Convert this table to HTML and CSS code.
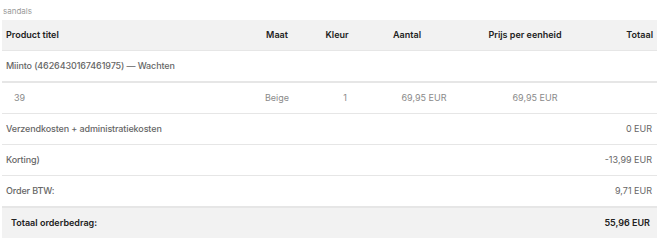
FILE: index.html
```html
<!DOCTYPE html>
<html>
<head>
<meta charset="utf-8">
<link rel="stylesheet" href="styles.css">
</head>
<body>
<div class="wrap">
  <div class="caption">sandals</div>
  <table class="order">
    <colgroup>
      <col class="c-prod"><col class="c-maat"><col class="c-kleur"><col class="c-aantal"><col class="c-prijs"><col class="c-tot">
    </colgroup>
    <thead>
      <tr class="head">
        <th class="left">Product titel</th>
        <th>Maat</th>
        <th>Kleur</th>
        <th class="h-aantal">Aantal</th>
        <th class="h-prijs">Prijs per eenheid</th>
        <th class="right">Totaal</th>
      </tr>
    </thead>
    <tbody>
      <tr class="group">
        <td class="left" colspan="6">Miinto (4626430167461975) — Wachten</td>
      </tr>
      <tr class="item">
        <td class="left indent">39</td>
        <td>Beige</td>
        <td class="qty">1</td>
        <td class="d-aantal">69,95 EUR</td>
        <td class="d-prijs">69,95 EUR</td>
        <td></td>
      </tr>
      <tr class="sum">
        <td class="left" colspan="5">Verzendkosten + administratiekosten</td>
        <td class="right">0 EUR</td>
      </tr>
      <tr class="sum">
        <td class="left" colspan="5">Korting)</td>
        <td class="right">-13,99 EUR</td>
      </tr>
      <tr class="sum last">
        <td class="left" colspan="5">Order BTW:</td>
        <td class="right">9,71 EUR</td>
      </tr>
      <tr class="total">
        <td class="left" colspan="5">Totaal orderbedrag:</td>
        <td class="right">55,96 EUR</td>
      </tr>
    </tbody>
  </table>
</div>
</body>
</html>
```

FILE: styles.css
```css
html, body {
  margin: 0;
  padding: 0;
  background: #fff;
}
body {
  font-family: Inter, "Noto Sans", sans-serif;
  color: #666;
}
.wrap {
  padding: 5px 8px 0 2px;
}
.caption {
  font-size: 8px;
  color: #9a9a9a;
  padding-left: 1px;
  height: 15px;
  line-height: 12px;
}
.order {
  width: 655px;
  border-collapse: collapse;
  table-layout: fixed;
  font-size: 9px;
  line-height: 12px;
}
.c-prod { width: 243px; }
.c-maat { width: 64px; }
.c-kleur { width: 56px; }
.c-aantal { width: 112px; }
.c-prijs { width: 100px; }
.c-tot { width: 80px; }

.order th, .order td {
  height: 30px;
  padding: 0 4px;
  text-align: center;
  border-bottom: 1px solid #e6e6e6;
  white-space: nowrap;
}
.order th {
  background: #f2f2f2;
  color: #222;
  font-weight: 600;
}
.order .left { text-align: left; }
.order .right { text-align: right; }
.order .h-aantal { padding-right: 32px; }
.order .h-prijs { padding-right: 8px; }
.order .d-aantal { padding-left: 10px; }
.order .d-prijs { padding-left: 20px; }
.group td {
  font-weight: 500;
  letter-spacing: -0.12px;
  color: #666;
  border-bottom: 2px solid #e6e6e6;
}
.item td {
  color: #8a8a8a;
}
.item .indent { padding-left: 12px; }
.item .qty { padding-left: 20px; }
.sum td {
  color: #666;
  font-weight: 400;
}
.sum .left { font-weight: 500; letter-spacing: -0.12px; }
.sum .right { padding-right: 5px; }
.sum.last td { border-bottom: 2px solid #e6e6e6; }
.total td {
  background: #f2f2f2;
  color: #222;
  font-weight: 600;
  border-bottom: none;
}
.total .left { padding-left: 9px; }
.total .right { padding-right: 7px; }
```
